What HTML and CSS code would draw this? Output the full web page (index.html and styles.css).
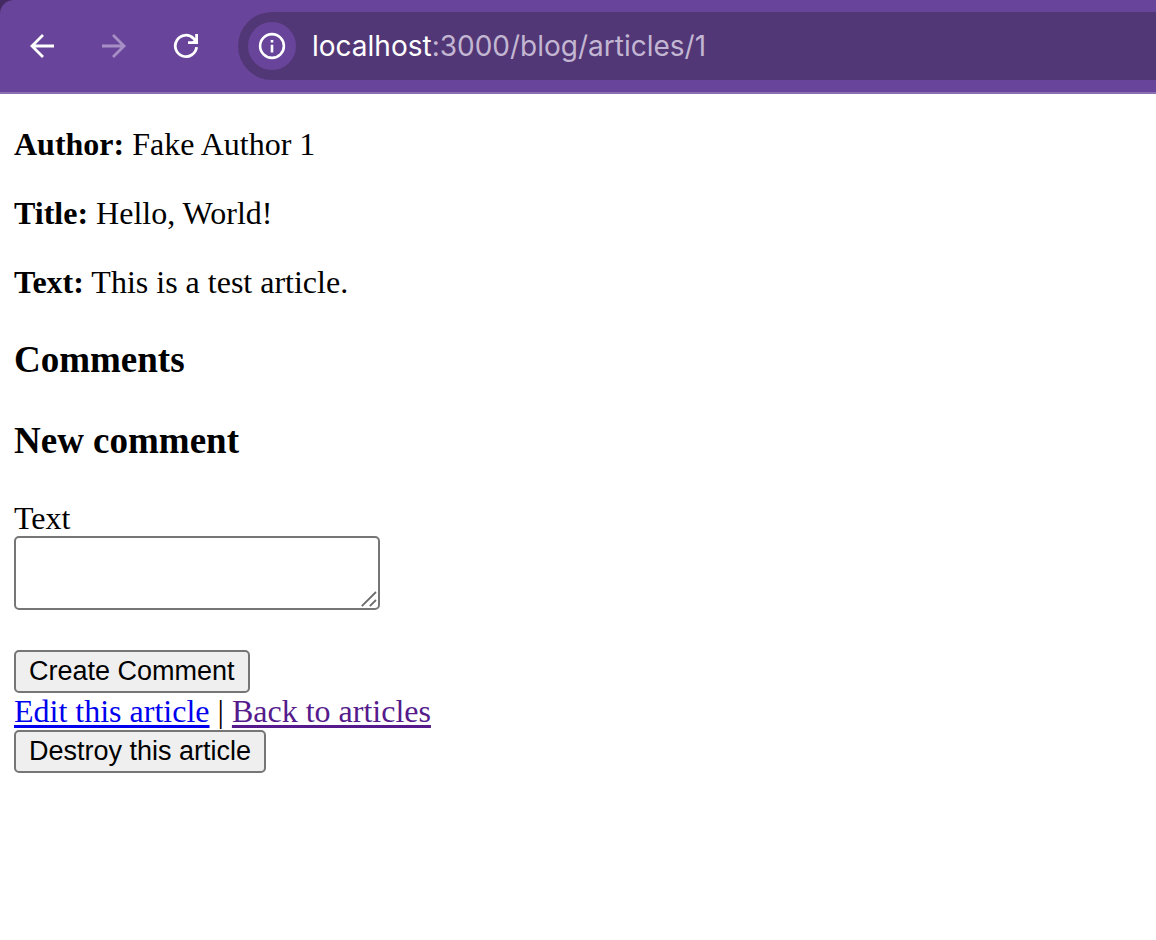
FILE: index.html
```html
<!DOCTYPE html>
<html lang="en">
<head>
<meta charset="utf-8">
<title>Article</title>
<link rel="stylesheet" href="styles.css">
</head>
<body>
<header class="frame">
  <div class="toolbar">
    <nav class="nav" aria-label="Browser">
      <button class="nav-button" type="button" aria-label="Back">
        <svg width="26" height="26" viewBox="0 0 26 26" fill="none" stroke="currentColor" stroke-width="2.8"><path d="M25 13H3M14 2 3 13l11 11"/></svg>
      </button>
      <button class="nav-button" type="button" aria-label="Forward" disabled>
        <svg width="26" height="26" viewBox="0 0 26 26" fill="none" stroke="currentColor" stroke-width="2.8"><path d="M1 13h22M12 2l11 11-11 11"/></svg>
      </button>
      <button class="nav-button" type="button" aria-label="Reload">
        <svg width="26" height="26" viewBox="0 0 26 26" fill="none" stroke="currentColor" stroke-width="2.8"><path d="M23.600 14.200A10.700 10.700 0 1 1 20.600 5.400l2.800 3.200"/><path d="M23.600 1v8.600H15"/><path d="M23 5v4h-4z" fill="currentColor" stroke="none"/></svg>
      </button>
    </nav>
    <div class="address">
      <button class="info" type="button" aria-label="Site information">
        <svg width="28" height="28" viewBox="0 0 28 28" fill="none" stroke="currentColor" stroke-width="2.600"><circle cx="14" cy="14" r="11.900"/><path d="M14 12.700V20.500M14 8v2.500"/></svg>
      </button>
      <div class="url"><span class="host">localhost</span>:3000/blog/articles/1</div>
    </div>
  </div>
</header>
<main class="page">
  <p class="field"><strong>Author:</strong> Fake Author 1</p>
  <p class="field"><strong>Title:</strong> Hello, World!</p>
  <p class="field"><strong>Text:</strong> This is a test article.</p>
  <h3 class="heading">Comments</h3>
  <h3 class="heading">New comment</h3>
  <form class="form">
    <label class="label" for="comment">Text</label>
    <div class="editor">
      <textarea class="textarea" id="comment"></textarea>
      <svg class="grip" width="16" height="16" viewBox="0 0 16 16" fill="none" stroke="#6b6b6b" stroke-width="1.800" aria-hidden="true"><path d="M.8 15.200 15 1M8.800 15.200 15 9"/></svg>
    </div>
    <button class="button" type="button">Create Comment</button>
  </form>
  <div class="links"><a class="link" href="#edit">Edit this article</a> | <a class="link seen" href="#articles">Back to articles</a></div>
  <button class="button" type="button">Destroy this article</button>
</main>
</body>
</html>
```
FILE: styles.css
```css
* { box-sizing: border-box; }
body {
  margin: 0;
  background: #fff;
  color: #000;
  font: 32px/37px "Liberation Serif", serif;
}
.frame { background: #432a63; }
.toolbar {
  display: flex;
  align-items: center;
  height: 94px;
  padding: 12px 0;
  border-bottom: 2px solid #8c6fb2;
  border-top-left-radius: 14px;
  background: #68449a;
  color: #fff;
}
.nav { display: flex; gap: 24px; padding: 0 28px 0 18px; }
.nav-button, .info {
  display: flex;
  align-items: center;
  justify-content: center;
  width: 48px;
  height: 48px;
  padding: 0;
  border: 0;
  border-radius: 50%;
  background: none;
  color: #fff;
}
.nav-button:disabled { color: #a78fc6; }
.address {
  display: flex;
  flex: 1;
  align-items: center;
  gap: 16px;
  height: 68px;
  padding-left: 10px;
  border-radius: 34px 0 0 34px;
  background: #523776;
}
.info { background: #68449a; }
.url {
  color: #c3b6d2;
  font: 28px/36px Inter, sans-serif;
  white-space: nowrap;
}
.host { color: #fff; }
.page {
  display: flex;
  flex-direction: column;
  align-items: flex-start;
  padding: 32px 14px;
}
.field { margin: 0 0 32px; }
.heading { margin: 0 0 38px; font-size: 37px; line-height: 43px; }
.field + .heading { margin-top: 5px; }
.form { display: flex; flex-direction: column; align-items: flex-start; }
.label { line-height: 36px; }
.editor { position: relative; display: flex; margin-bottom: 40px; }
.textarea {
  width: 366px;
  height: 74px;
  padding: 4px;
  border: 2px solid #767676;
  border-radius: 5px;
  background: #fff;
  font: 27px/30px "Liberation Mono", monospace;
  resize: none;
}
.grip { position: absolute; right: 3px; bottom: 3px; pointer-events: none; }
.button {
  padding: 4px 13px;
  border: 2px solid #767676;
  border-radius: 5px;
  background: #efefef;
  color: #000;
  font: 27px/31px "Liberation Sans", sans-serif;
}
.link { color: #00e; text-decoration: underline; text-decoration-thickness: 3px; text-underline-offset: 3px; }
.seen { color: #551a8b; }
```
